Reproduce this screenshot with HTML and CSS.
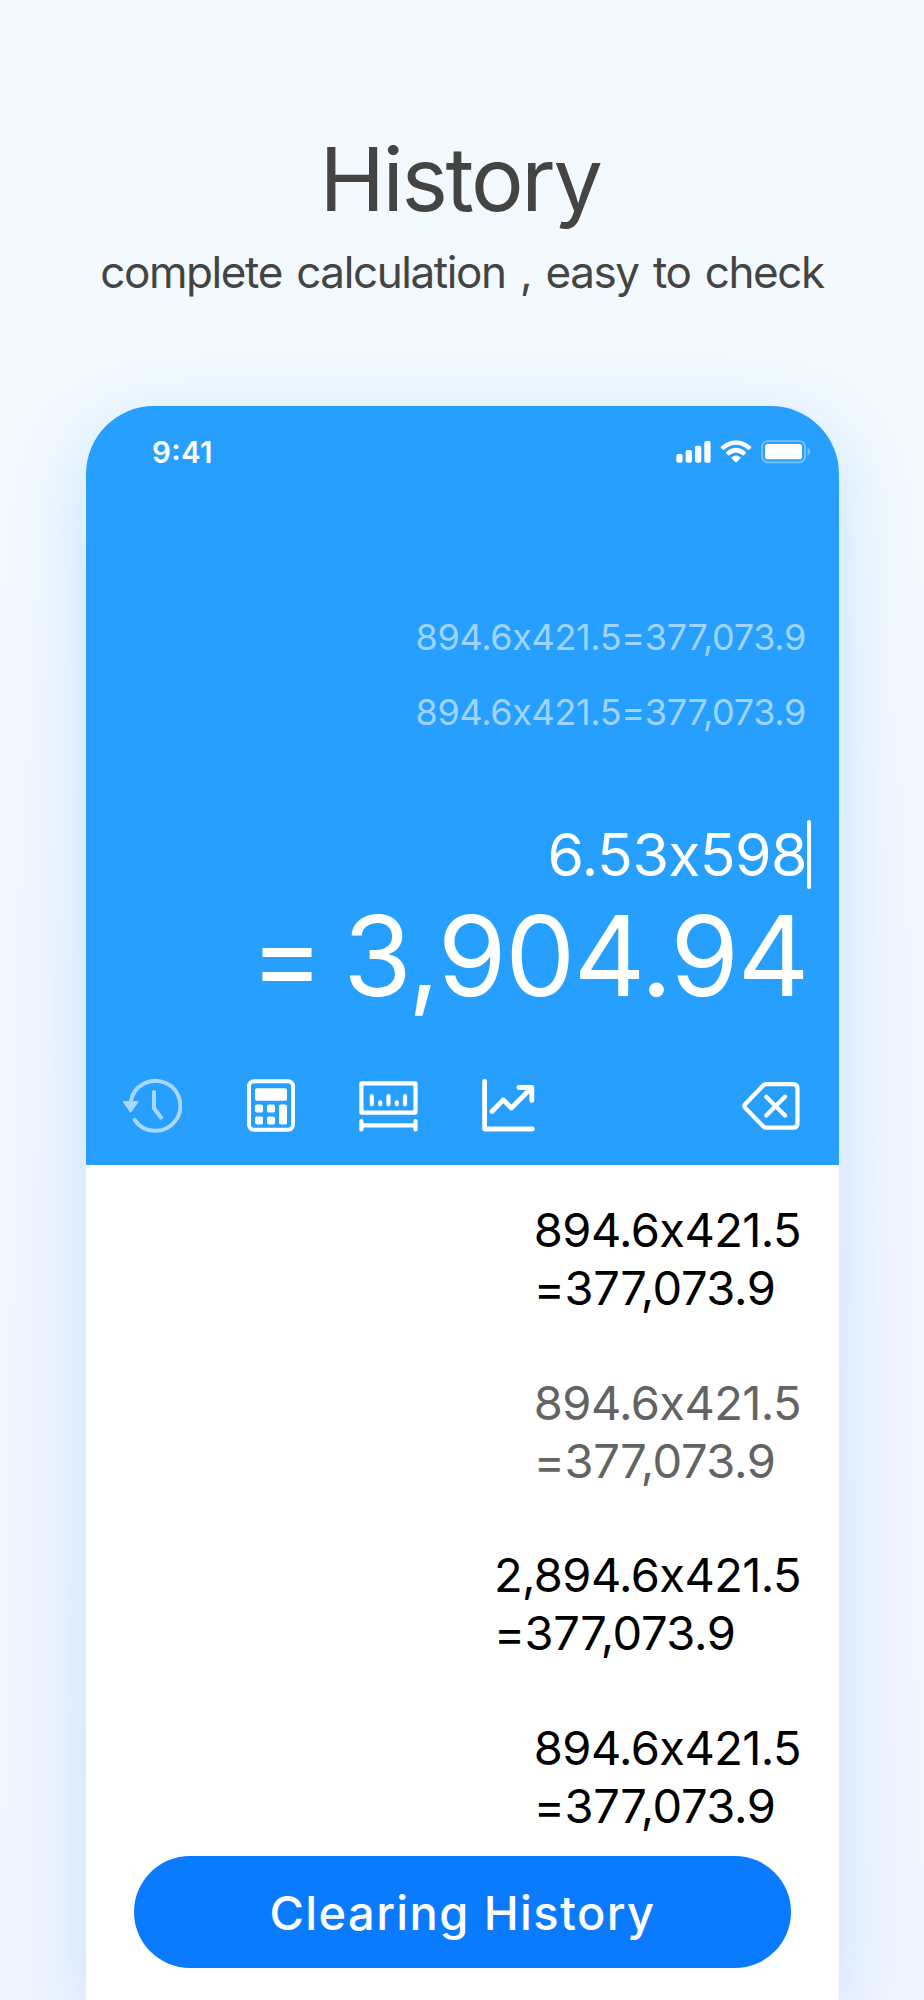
FILE: index.html
```html
<!DOCTYPE html>
<html lang="en">
<head>
    <meta charset="UTF-8">
    <meta name="viewport" content="width=device-width, initial-scale=1.0">
    <title>History</title>
    <link rel="stylesheet" href="styles.css">
</head>
<body>
    <header class="intro">
        <h1>History</h1>
        <p>complete calculation , easy to check</p>
    </header>

    <main class="phone">
        <section class="screen">
            <div class="status-bar">
                <span class="clock">9:41</span>
                <svg class="status-icons" width="136" height="24" viewBox="0 0 136 24" fill="#fff">
                    <!-- signal -->
                    <rect x="0.3" y="14" width="6.3" height="8.7" rx="2"/>
                    <rect x="9.6" y="10" width="6.3" height="12.7" rx="2"/>
                    <rect x="19" y="5.8" width="6.3" height="16.9" rx="2"/>
                    <rect x="28.3" y="1" width="6.3" height="21.7" rx="2"/>
                    <!-- wifi -->
                    <path d="M45 6.6Q60 -6.2 75 6.6Q75.7 7.3 75 8L73 9.7Q72.5 10.1 72 9.7Q60 0 48 9.7Q47.5 10.1 47 9.7L45 8Q44.3 7.3 45 6.6Z"/>
                    <path d="M50.2 12Q60 3.7 69.8 12Q70.5 12.7 69.8 13.4L67.7 15.2Q67.2 15.6 66.6 15.2Q60 9.7 53.4 15.2Q52.8 15.6 52.3 15.2L50.2 13.4Q49.5 12.7 50.2 12Z"/>
                    <path d="M55.7 17.2Q60 13.8 64.3 17.2Q64.9 17.8 64.3 18.4L60.7 22Q60 22.6 59.3 22L55.7 18.4Q55.1 17.8 55.7 17.2Z"/>
                    <!-- battery -->
                    <rect x="86" y="1" width="43" height="21.3" rx="5.5" fill="none" stroke="#fff" stroke-width="1.7" opacity="0.4"/>
                    <rect x="89" y="4" width="37" height="15.3" rx="2.6"/>
                    <path d="M131.5 7.7Q134.2 9 134.2 11.5Q134.2 14 131.5 15.3Z" opacity="0.4"/>
                </svg>
            </div>

            <div class="past">
                <div>894.6x421.5=377,073.9</div>
                <div>894.6x421.5=377,073.9</div>
            </div>

            <div class="expression"><span>6.53x598</span><i class="caret"></i></div>
            <div class="result"><span class="equals">=</span><span>3,904.94</span></div>

            <nav class="toolbar">
                <svg class="active" width="60" height="56" viewBox="0 0 60 56" fill="none" stroke="#fff" stroke-width="4" stroke-linecap="round" stroke-linejoin="round">
                    <path d="M8.7 24A25 25 0 1 1 12.7 41.8"/>
                    <path d="M32 14V30.3L39 39.5"/>
                    <path d="M2 24H15.4L8.7 33.5Z" fill="#fff" stroke-width="2"/>
                </svg>
                <svg class="calc" width="48" height="56" viewBox="0 0 48 56" fill="#fff">
                    <rect x="2" y="3.2" width="44" height="48.6" rx="5" fill="none" stroke="#fff" stroke-width="4"/>
                    <rect x="8" y="10.3" width="32" height="12.4" rx="1.8"/>
                    <rect x="8" y="26.4" width="8" height="8.2" rx="1.8"/>
                    <rect x="20" y="26.4" width="8" height="8.2" rx="1.8"/>
                    <rect x="8" y="38.4" width="8" height="8.2" rx="1.8"/>
                    <rect x="20" y="38.4" width="8" height="8.2" rx="1.8"/>
                    <rect x="32" y="26.4" width="8" height="20.2" rx="1.8"/>
                </svg>
                <svg class="ruler" width="59" height="56" viewBox="0 0 59 56" fill="none" stroke="#fff" stroke-width="4.2" stroke-linecap="round" stroke-linejoin="round">
                    <path d="M2.4 5.3H56.5V34.7H2.4Z"/>
                    <path d="M12.8 18V26.3M21.3 24.3V26.3M29.5 18V26.3M37.8 24.3V26.3M46 18V26.3"/>
                    <path d="M2.4 43.2V51.5M56.5 43.2V51.5M2.4 47.3H56.5"/>
                </svg>
                <svg class="chart" width="54" height="56" viewBox="0 0 54 56" fill="none" stroke="#fff" stroke-width="4.8" stroke-linecap="round" stroke-linejoin="round">
                    <path d="M2.6 3.5V51H50.3"/>
                    <path d="M10 33.5L21.2 21.8L29.4 30L49.6 9.8M36.8 9.5H49.8V22.5"/>
                </svg>
                <svg class="backspace" width="58" height="56" viewBox="0 0 58 56" fill="none" stroke="#fff" stroke-width="4.2" stroke-linecap="round" stroke-linejoin="round">
                    <path d="M24 6.2H51Q55.5 6.2 55.5 10.7V45.2Q55.5 49.7 51 49.7H24Q22.5 49.7 21.4 48.6L3.3 30Q1.4 28 3.3 26L21.4 7.3Q22.5 6.2 24 6.2Z"/>
                    <path d="M24.2 18.8L43 37.5M43 18.8L24.2 37.5"/>
                </svg>
            </nav>
        </section>

        <section class="history">
            <div class="entry">894.6x421.5<br><span>=377,073.9</span></div>
            <div class="entry faded">894.6x421.5<br><span>=377,073.9</span></div>
            <div class="entry">2,894.6x421.5<br><span>=377,073.9</span></div>
            <div class="entry">894.6x421.5<br><span>=377,073.9</span></div>
        </section>

        <button class="clear">Clearing History</button>
    </main>
</body>
</html>
```
FILE: styles.css
```css
* {
    box-sizing: border-box;
}

body {
    margin: 0;
    height: 2000px;
    overflow: hidden;
    font-family: Inter, "Liberation Sans", sans-serif;
    background: linear-gradient(180deg, #f2faff 0%, #f2f9ff 20%, #f1f6ff 50%, #f1f5ff 100%);
}

.intro {
    height: 406px;
    padding-top: 129px;
    text-align: center;
    color: #444543;
}

h1 {
    margin: 0;
    padding-right: 4px;
    font-size: 88px;
    line-height: 100px;
    font-weight: 400;
    letter-spacing: -2.4px;
}

.intro p {
    margin: 13px 0 0;
    font-size: 44px;
    line-height: 60px;
    letter-spacing: -1.4px;
    word-spacing: 3.3px;
}

.phone {
    width: 753px;
    height: 1594px;
    margin-left: 86px;
    border-radius: 68px 68px 0 0;
    background: #fff;
    box-shadow: 0 20px 70px rgba(70, 170, 255, 0.26);
    overflow: hidden;
}

.screen {
    height: 759px;
    padding-top: 31px;
    background: #279fff;
    color: #fff;
    font-feature-settings: "calt" 0; /* keep the plain x between digits */
}

.status-bar {
    display: flex;
    align-items: center;
    justify-content: space-between;
    height: 30px;
    padding: 0 27px 0 66px;
}

.clock {
    font-size: 29.5px;
    font-weight: 600;
    line-height: 30px;
    letter-spacing: 0.3px;
    font-feature-settings: "calt" 1;
}

.past {
    padding: 133px 33px 0 0;
    text-align: right;
    font-size: 36px;
    font-weight: 400;
    line-height: 74.5px;
    letter-spacing: -0.35px;
    color: #a0d4ff;
}

.expression {
    display: flex;
    justify-content: flex-end;
    align-items: center;
    height: 80px;
    margin-top: 65px;
    padding-right: 28px;
    font-size: 59px;
    letter-spacing: -0.6px;
}

.caret {
    width: 4px;
    height: 69px;
    border-radius: 2px;
    background: #fff;
}

.result {
    display: flex;
    justify-content: flex-end;
    padding-right: 31px;
    font-size: 111px;
    line-height: 124px;
    letter-spacing: -1.4px;
}

.equals {
    margin-right: 21px;
}

.toolbar {
    display: flex;
    margin-top: 60px;
    padding-left: 36px;
}

.active {
    opacity: 0.6;
}

.calc {
    margin-left: 65px;
}

.ruler {
    margin-left: 64px;
}

.chart {
    margin-left: 64px;
}

.backspace {
    margin-left: 206px;
}

.history {
    display: flex;
    flex-direction: column;
    align-items: flex-end;
    gap: 56.5px;
    height: 691px;
    padding: 36px 38px 0 0;
    font-size: 47px;
    line-height: 58px;
    letter-spacing: -0.6px;
    color: #000;
    font-feature-settings: "calt" 0;
}

.entry span {
    letter-spacing: -0.4px;
}

.faded {
    color: #636363;
}

.clear {
    display: block;
    width: 657px;
    height: 112px;
    margin-left: 48px;
    border: none;
    border-radius: 56px;
    background: #0a7aff;
    color: #fff;
    font-family: inherit;
    font-size: 47px;
    font-weight: 500;
    letter-spacing: 1.4px;
}
```
